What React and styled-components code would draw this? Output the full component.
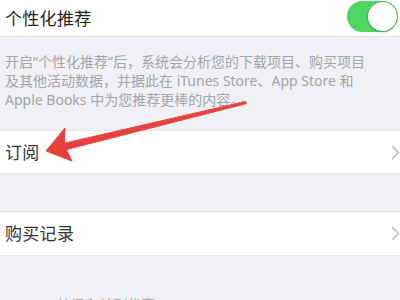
import React from 'react';
import styled, { createGlobalStyle } from 'styled-components';

const GlobalStyle = createGlobalStyle`
	html, body {
		margin: 0;
		padding: 0;
		background: #efeff4;
	}
	body {
		font-family: "Noto Sans", "Noto Sans CJK SC", sans-serif;
	}
`

const Page = styled.div`
	position: relative;
	width: 400px;
	height: 300px;
	overflow: hidden;
	background: #f0f0f5;
`

const Cell = styled.div`
	display: flex;
	align-items: center;
	justify-content: space-between;
	height: ${props => props.h || 44}px;
	padding-left: 5px;
	padding-right: ${props => props.pr || 0}px;
	background: #fff;
	border-top: ${props => props.top ? '1px solid #e4e4e9' : 'none'};
	border-bottom: 1px solid #e4e4e9;
	box-sizing: border-box;
`

const CellLabel = styled.span`
	font-size: 17px;
	line-height: 1;
	color: ${props => props.dark ? '#1f1f22' : '#333336'};
	letter-spacing: 0.3px;
`

const Switch = styled.div`
	position: relative;
	width: 51px;
	height: 31px;
	border-radius: 16px;
	background: #4cd764;
	margin-top: -3px;
`

const Knob = styled.div`
	position: absolute;
	top: 1px;
	right: 1px;
	width: 29px;
	height: 29px;
	border-radius: 50%;
	background: #fff;
	box-shadow: 0 0 0 1px rgba(0, 0, 0, 0.12), 0 2px 3px rgba(0, 0, 0, 0.12);
`

const Footer = styled.p`
	margin: 0;
	padding: 15px 5px 0;
	height: 93px;
	box-sizing: border-box;
	font-size: 14px;
	line-height: 19px;
	color: #a4a4a9;
	white-space: nowrap;
`

const Gap = styled.div`
	height: ${props => props.h}px;
`

const SectionHeader = styled.div`
	padding: 0 5px;
	font-size: 14px;
	line-height: 19px;
	color: #a4a4a9;
	text-transform: uppercase;
	white-space: nowrap;
`

const Chevron = () => (
	<svg width="9" height="15" viewBox="0 0 9 15">
		<path d="M1.5 1.5 L7.5 7.5 L1.5 13.5" fill="none" stroke="#c7c7cc" strokeWidth="1.8" strokeLinecap="round" strokeLinejoin="round" />
	</svg>
)

const Overlay = styled.svg`
	position: absolute;
	left: 0;
	top: 0;
	pointer-events: none;
`

const Arrow = () => (
	<Overlay width="400" height="300" viewBox="0 0 400 300">
		<polygon
			points="46,151 65,128 64.4,143.2 245.6,101.4 246.4,103.6 66.4,149.6 72,161"
			fill="#e4433d"
			stroke="#e4433d"
			strokeWidth="1"
			strokeLinejoin="round"
		/>
	</Overlay>
)

const App = () => {
	return (
		<Page>
			<GlobalStyle />
			<Cell h={37} pr={2}>
				<CellLabel dark>个性化推荐</CellLabel>
				<Switch><Knob /></Switch>
			</Cell>
			<Footer>
				开启“个性化推荐”后，系统会分析您的下载项目、购买项目<br />
				及其他活动数据，并据此在 iTunes Store、App Store 和<br />
				Apple Books 中为您推荐更棒的内容。
			</Footer>
			<Cell top h={44}>
				<CellLabel>订阅</CellLabel>
				<Chevron />
			</Cell>
			<Gap h={37} />
			<Cell top h={45}>
				<CellLabel>购买记录</CellLabel>
				<Chevron />
			</Cell>
			<Gap h={39} />
			<SectionHeader>iTunes 快讯和特别优惠</SectionHeader>
			<Arrow />
		</Page>
	)
}

export default App;
